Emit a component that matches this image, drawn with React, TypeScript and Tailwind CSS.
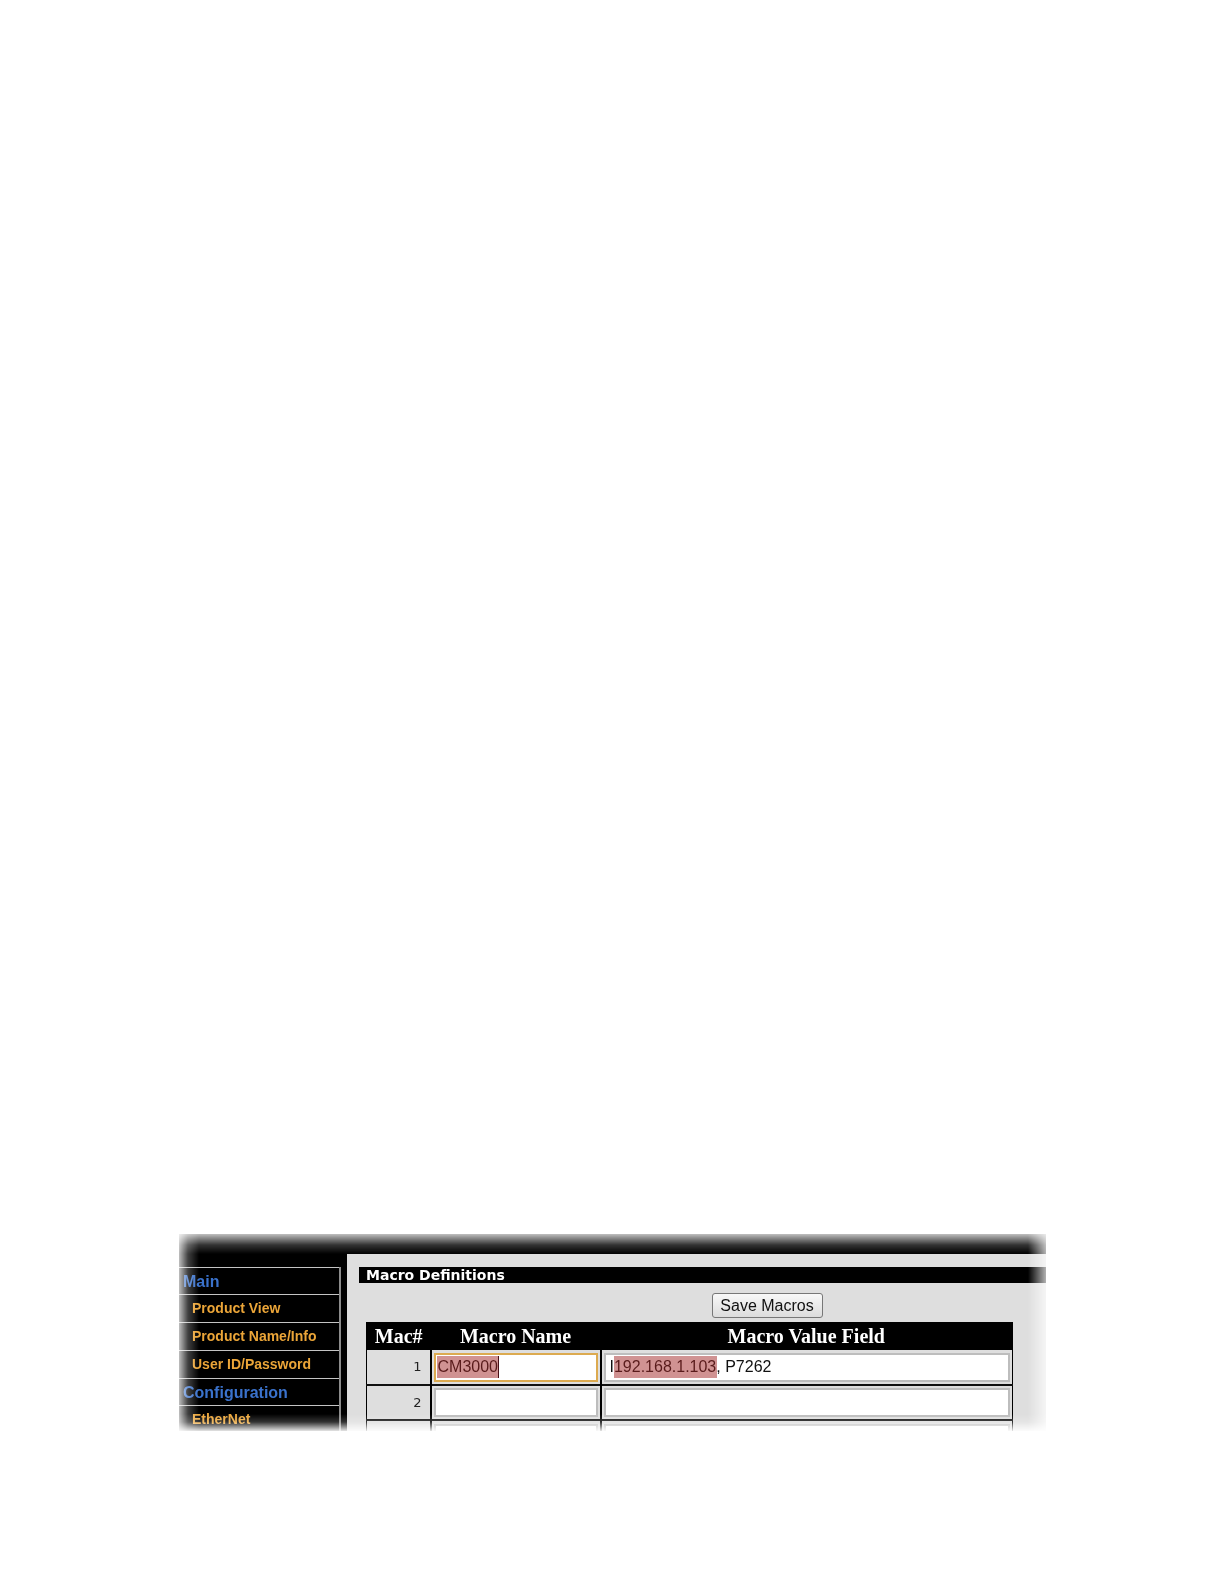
import React from "react";

type MenuEntry = { label: string; heading?: boolean };

const menu: MenuEntry[] = [
  { label: "Main", heading: true },
  { label: "Product View" },
  { label: "Product Name/Info" },
  { label: "User ID/Password" },
  { label: "Configuration", heading: true },
  { label: "EtherNet" },
];

type Macro = { id: number; name: string; value: string; focused?: boolean };

const macros: Macro[] = [
  { id: 1, name: "CM3000", value: "I192.168.1.103, P7262", focused: true },
  { id: 2, name: "", value: "" },
];

function SideMenu() {
  return (
    <nav className="w-[168px] shrink-0 bg-black pt-[33px] font-['Liberation_Sans',Arial,sans-serif] font-bold">
      <ul className="w-[162px] border-r-2 border-[#8c8c8c]">
        {menu.map((m) =>
          m.heading ? (
            <li
              key={m.label}
              className="h-[27px] border-t border-[#c4c4c4] pl-1 text-[16px] leading-[27px] text-[#3a72cc]"
            >
              {m.label}
            </li>
          ) : (
            <li key={m.label} className="h-7 border-t border-[#c4c4c4] pl-[13px] text-[14px] leading-[26px]">
              <a href="#" className="text-[#eba538]">
                {m.label}
              </a>
            </li>
          ),
        )}
      </ul>
    </nav>
  );
}

function MacroRow({ macro }: { macro: Macro }) {
  return (
    <tr className="h-[35px] border-b-2 border-[#111]">
      <td className="border-r-2 border-black py-0 pr-2 text-right font-['DejaVu_Sans',Verdana,sans-serif] text-[13px] leading-5 text-[#222]">
        {macro.id}
      </td>
      <td className="border-r-2 border-black px-[2px] py-0">
        <div className="relative">
          <input
            aria-label={`Macro ${macro.id} name`}
            defaultValue={macro.name}
            className={
              macro.focused
                ? "block h-[29px] w-full border-2 border-[#dcaa50] bg-white px-[2px] text-[16px] text-[#111] outline-none"
                : "block h-[29px] w-full border-2 border-[#bdbdbd] bg-white px-[2px] text-[16px] text-[#111] outline-none"
            }
          />
          {macro.focused && (
            <span className="pointer-events-none absolute top-[3px] left-[3px] h-[22px] w-[62px] border-r border-[#4a1018] bg-[#a12525]/50" />
          )}
        </div>
      </td>
      <td className="px-[2px] py-0">
        <div className="relative">
          <input
            aria-label={`Macro ${macro.id} value`}
            defaultValue={macro.value}
            className="block h-[29px] w-full border-2 border-[#bdbdbd] bg-white px-1 text-[16px] text-[#111] outline-none"
          />
          {macro.focused && (
            <span className="pointer-events-none absolute top-[3px] left-[10px] h-[22px] w-[103px] bg-[#a12525]/50" />
          )}
        </div>
      </td>
    </tr>
  );
}

export default function App() {
  return (
    <div className="flex min-h-screen flex-col justify-end bg-white pr-[178px] pb-[153px] pl-[179px] font-['Liberation_Sans',Arial,sans-serif]">
      <main className="h-[197px] overflow-hidden [mask-composite:intersect] [mask-image:linear-gradient(to_right,rgba(0,0,0,0.25),rgba(0,0,0,0.75)_9px,#000_20px,#000_calc(100%_-_18px),rgba(0,0,0,0.3)),linear-gradient(to_bottom,rgba(0,0,0,0.25),rgba(0,0,0,0.8)_11px,#000_20px,#000_calc(100%_-_17px),rgba(0,0,0,0.8)_calc(100%_-_9px),rgba(0,0,0,0.1))]">
        <div className="h-5 bg-black" />
        <div className="flex">
          <div className="-mt-5 flex bg-black">
            <SideMenu />
          </div>
          <section className="min-w-0 grow bg-[#dedede] pt-[13px] pl-3">
            <h1 className="h-4 bg-black pl-[7px] font-['DejaVu_Sans',Verdana,sans-serif] text-[14px] leading-[16px] font-bold text-white">
              Macro Definitions
            </h1>
            <div className="flex justify-center pt-[10px] pb-1 pl-[129px]">
              <button
                type="button"
                className="h-[25px] w-[111px] rounded-[3px] border border-[#777] bg-linear-to-b from-[#f8f8f8] to-[#dcdcdc] text-[16px] leading-[23px] text-[#111]"
              >
                Save Macros
              </button>
            </div>
            <div className="pr-[33px] pl-[7px]">
              <table className="w-full table-fixed border-collapse border-x border-black">
                <colgroup>
                  <col className="w-16" />
                  <col className="w-[170px]" />
                  <col />
                </colgroup>
                <thead>
                  <tr className="h-[28px] bg-black font-['Liberation_Serif','Times_New_Roman',serif] text-[20px] leading-[27px] text-white">
                    <th scope="col" className="p-0">Mac#</th>
                    <th scope="col" className="p-0">Macro Name</th>
                    <th scope="col" className="p-0">Macro Value Field</th>
                  </tr>
                </thead>
                <tbody>
                  {macros.map((m) => (
                    <MacroRow key={m.id} macro={m} />
                  ))}
                  <tr className="h-[35px]">
                    <td className="border-r-2 border-black" />
                    <td className="border-r-2 border-black px-[2px] py-0">
                      <input
                        aria-label="Macro 3 name"
                        className="block h-[29px] w-full border-2 border-[#bdbdbd] bg-white"
                      />
                    </td>
                    <td className="px-[2px] py-0">
                      <input
                        aria-label="Macro 3 value"
                        className="block h-[29px] w-full border-2 border-[#bdbdbd] bg-white"
                      />
                    </td>
                  </tr>
                </tbody>
              </table>
            </div>
          </section>
        </div>
      </main>
    </div>
  );
}
